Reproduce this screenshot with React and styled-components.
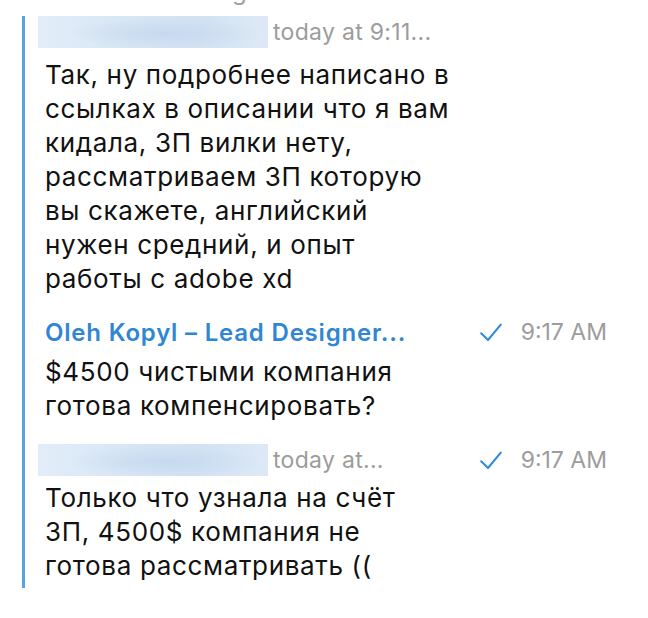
import React from "react";
import styled, { createGlobalStyle } from "styled-components";

const Global = createGlobalStyle`
  html, body { margin: 0; padding: 0; background: #fff; }
  body { font-family: Inter, Roboto, "Liberation Sans", sans-serif; -webkit-font-smoothing: antialiased; }
`;

const Page = styled.div`
  width: 648px;
  height: 618px;
  background: #fff;
  overflow: hidden;
`;

const ClippedLine = styled.div`
  height: 6px;
  overflow: hidden;
  padding-left: 232px;
  color: #a0a0a0;
  font-size: 24px;
  line-height: 24px;
`;

const ClippedText = styled.div`
  margin-top: -20px;
`;

const Thread = styled.div`
  margin: 10px 0 0 22px;
  border-left: 3px solid #56a5e2;
  padding: 0 41px 5px 13px;
  display: flex;
  flex-direction: column;
`;

const Message = styled.div`
  display: flex;
  flex-direction: column;
  margin-top: ${(p) => p.$gap || 0}px;
`;

const Header = styled.div`
  display: flex;
  align-items: center;
  height: 32px;
`;

const NameBlur = styled.div`
  width: 230px;
  height: 32px;
  flex: none;
  background:
    radial-gradient(ellipse 60% 70% at 55% 55%, rgba(196, 216, 238, 0.9), rgba(196, 216, 238, 0) 70%),
    linear-gradient(90deg, #e2edf9 0%, #d7e6f5 40%, #d2e2f3 70%, #dde9f6 100%);
`;

const Meta = styled.span`
  margin-left: 5px;
  font-size: 23px;
  letter-spacing: 0.3px;
  color: #9c9c9c;
  white-space: nowrap;
`;

const Name = styled.span`
  padding-left: 7px;
  font-size: 24px;
  font-weight: 600;
  letter-spacing: 0.8px;
  color: #2f86d3;
  white-space: nowrap;
`;

const Status = styled.div`
  margin-left: auto;
  display: flex;
  align-items: center;
  gap: 19px;
  font-size: 23px;
  color: #9c9c9c;
`;

const Body = styled.div`
  padding-left: 7px;
  font-size: 26px;
  letter-spacing: 0.65px;
  line-height: 34px;
  color: #111;
  margin-top: ${(p) => p.$top || 0}px;
`;

const Check = () => (
  <svg width="22" height="19" viewBox="0 0 22 19" fill="none">
    <path d="M1.2 10.2 L8 17 L20.8 1.6" stroke="#2d8ad8" strokeWidth="2" strokeLinecap="round" strokeLinejoin="round" />
  </svg>
);

const Line = styled.div``;

export default function App() {
  return (
    <Page>
      <Global />
      <ClippedLine>
        <ClippedText>g</ClippedText>
      </ClippedLine>
      <Thread>
        <Message>
          <Header>
            <NameBlur />
            <Meta>today at 9:11...</Meta>
          </Header>
          <Body $top={10}>
            <Line>Так, ну подробнее написано в</Line>
            <Line>ссылках в описании что я вам</Line>
            <Line>кидала, ЗП вилки нету,</Line>
            <Line>рассматриваем ЗП которую</Line>
            <Line>вы скажете, английский</Line>
            <Line>нужен средний, и опыт</Line>
            <Line>работы с adobe xd</Line>
          </Body>
        </Message>
        <Message $gap={20}>
          <Header>
            <Name>Oleh Kopyl – Lead Designer...</Name>
            <Status>
              <Check />
              <span>9:17 AM</span>
            </Status>
          </Header>
          <Body $top={7}>
            <Line>$4500 чистыми компания</Line>
            <Line>готова компенсировать?</Line>
          </Body>
        </Message>
        <Message $gap={21}>
          <Header>
            <NameBlur />
            <Meta>today at...</Meta>
            <Status>
              <Check />
              <span>9:17 AM</span>
            </Status>
          </Header>
          <Body $top={5}>
            <Line>Только что узнала на счёт</Line>
            <Line>ЗП, 4500$ компания не</Line>
            <Line>готова рассматривать ((</Line>
          </Body>
        </Message>
      </Thread>
    </Page>
  );
}
